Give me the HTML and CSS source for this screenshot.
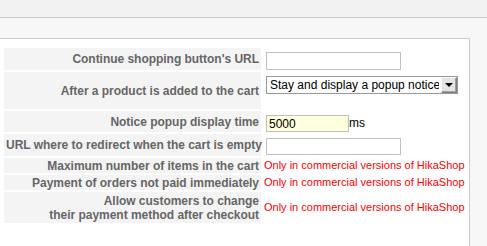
FILE: index.html
```html
<!DOCTYPE html>
<html>
<head>
<meta charset="utf-8">
<link rel="stylesheet" href="styles.css">
</head>
<body>
<div class="topbar"></div>
<div class="page">
  <div class="panel">
    <table class="config">
      <tr class="r1">
        <td class="key">Continue shopping button's URL</td>
        <td class="val top"><input type="text" class="txt wide"></td>
      </tr>
      <tr class="r2">
        <td class="key">After a product is added to the cart</td>
        <td class="val top">
          <span class="selwrap">
            <select class="sel"><option>Stay and display a popup notice</option></select>
            <span class="selbtn"><span class="tri"></span></span>
          </span>
        </td>
      </tr>
      <tr class="r3">
        <td class="key">Notice popup display time</td>
        <td class="val top"><input type="text" class="txt short" value="5000"><span class="unit">ms</span></td>
      </tr>
      <tr class="r4">
        <td class="key">URL where to redirect when the cart is empty</td>
        <td class="val top"><input type="text" class="txt wide"></td>
      </tr>
      <tr class="r5">
        <td class="key">Maximum number of items in the cart</td>
        <td class="val"><span class="only">Only in commercial versions of HikaShop</span></td>
      </tr>
      <tr class="r6">
        <td class="key">Payment of orders not paid immediately</td>
        <td class="val"><span class="only">Only in commercial versions of HikaShop</span></td>
      </tr>
      <tr class="r7">
        <td class="key">Allow customers to change<br>their payment method after checkout</td>
        <td class="val"><span class="only">Only in commercial versions of HikaShop</span></td>
      </tr>
    </table>
  </div>
</div>
</body>
</html>
```

FILE: styles.css
```css
html, body {
  margin: 0;
  padding: 0;
  background: #f7f7f7;
  font-family: "Liberation Sans", Arial, sans-serif;
}
.topbar {
  height: 17px;
  background: #f2f2f2;
  border-bottom: 1px solid #cccccc;
}
.page {
  padding-top: 20px;
  height: 208px;
  overflow: hidden;
}
.panel {
  width: 470px;
  height: 220px;
  background: #ffffff;
  border: 1px solid #cccccc;
  border-left: none;
  border-bottom: none;
  box-sizing: border-box;
  padding-top: 7px;
  padding-left: 2px;
}
.config {
  border-collapse: separate;
  border-spacing: 2px;
  table-layout: fixed;
  width: 460px;
}
.config td {
  padding: 0;
}
.key {
  width: 253px;
  background: #f4f4f4;
  color: #666666;
  font-weight: bold;
  font-size: 12px;
  line-height: 14px;
  text-align: right;
  vertical-align: middle;
  padding: 0 2px !important;
  white-space: nowrap;
  letter-spacing: -0.03px;
}
.val {
  vertical-align: middle;
  padding-left: 1px !important;
  white-space: nowrap;
  font-size: 11px;
  line-height: 13px;
}
.val.top {
  vertical-align: top;
}
.r1 td { height: 22px; }
.r2 td { height: 37px; }
.r3 td { height: 21px; }
.r4 td { height: 22px; }
.r5 td { height: 15px; }
.r6 td { height: 15px; }
.r7 td { height: 31px; }
.txt {
  display: inline-block;
  vertical-align: top;
  margin: 4px 0 0 2px;
  padding: 0 3px;
  box-sizing: border-box;
  border: 1px solid #c0c0c0;
  background: #ffffff;
  font-family: "Liberation Sans", Arial, sans-serif;
  font-size: 12px;
  color: #000000;
  outline: none;
}
.txt.wide {
  width: 135px;
  height: 18px;
}
.r4 .txt.wide {
  height: 17px;
}
.txt.short {
  width: 83px;
  height: 17px;
  background: #ffffdd;
  padding-left: 2px;
}
.unit {
  display: inline-block;
  vertical-align: top;
  margin-top: 6px;
  font-size: 12px;
  line-height: 13px;
  color: #000000;
}
.selwrap {
  position: relative;
  display: inline-block;
  vertical-align: top;
  margin: 4px 0 0 2px;
}
.sel {
  appearance: none;
  -webkit-appearance: none;
  display: block;
  width: 192px;
  height: 18px;
  margin: 0;
  padding: 0 18px 0 3px;
  border: 1px solid #999999;
  border-radius: 0;
  background: #ffffff;
  font-family: "Liberation Sans", Arial, sans-serif;
  font-size: 12px;
  color: #000000;
  outline: none;
}
.selbtn {
  position: absolute;
  top: 1px;
  right: 1px;
  width: 16px;
  height: 16px;
  box-sizing: border-box;
  background: #e4e4e4;
  border: 1px solid #808080;
  border-top-color: #ffffff;
  border-left-color: #ffffff;
  box-shadow: inset -1px -1px 0 #a0a0a0;
  display: flex;
  align-items: center;
  justify-content: center;
}
.tri {
  width: 0;
  height: 0;
  border-left: 4px solid transparent;
  border-right: 4px solid transparent;
  border-top: 4px solid #000000;
}
.only {
  color: #ff0000;
  font-size: 11px;
}
```
